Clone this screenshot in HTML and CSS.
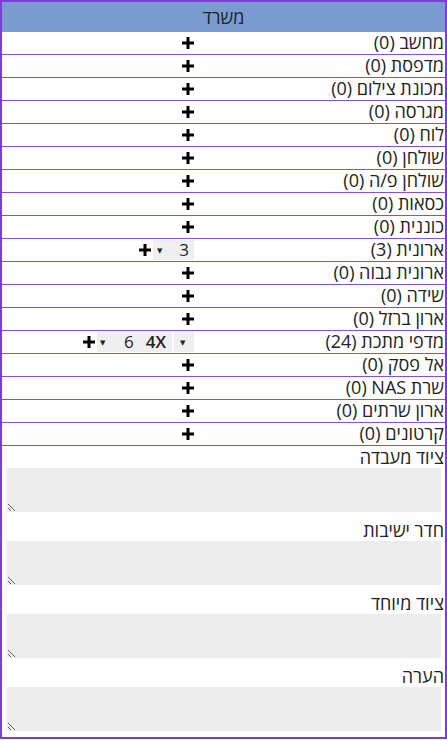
FILE: index.html
```html
<!DOCTYPE html>
<html lang="he" dir="rtl">
<head>
    <meta charset="UTF-8">
    <meta name="viewport" content="width=device-width, initial-scale=1.0">
    <title>משרד</title>
    <link rel="stylesheet" href="styles.css">
</head>
<body>
    <div class="office">
        <div class="office-head">משרד</div>

        <!-- equipment rows: name on the right, add button / pickers on the left -->
        <div class="item"><span class="name">מחשב (0)</span><span class="ctrl"><svg class="plus" viewBox="0 0 12 12"><rect x="4.5" y="0" width="3" height="12"/><rect x="0" y="4.5" width="12" height="3"/></svg></span></div>
        <div class="item"><span class="name">מדפסת (0)</span><span class="ctrl"><svg class="plus" viewBox="0 0 12 12"><rect x="4.5" y="0" width="3" height="12"/><rect x="0" y="4.5" width="12" height="3"/></svg></span></div>
        <div class="item"><span class="name">מכונת צילום (0)</span><span class="ctrl"><svg class="plus" viewBox="0 0 12 12"><rect x="4.5" y="0" width="3" height="12"/><rect x="0" y="4.5" width="12" height="3"/></svg></span></div>
        <div class="item"><span class="name">מגרסה (0)</span><span class="ctrl"><svg class="plus" viewBox="0 0 12 12"><rect x="4.5" y="0" width="3" height="12"/><rect x="0" y="4.5" width="12" height="3"/></svg></span></div>
        <div class="item"><span class="name">לוח (0)</span><span class="ctrl"><svg class="plus" viewBox="0 0 12 12"><rect x="4.5" y="0" width="3" height="12"/><rect x="0" y="4.5" width="12" height="3"/></svg></span></div>
        <div class="item"><span class="name">שולחן (0)</span><span class="ctrl"><svg class="plus" viewBox="0 0 12 12"><rect x="4.5" y="0" width="3" height="12"/><rect x="0" y="4.5" width="12" height="3"/></svg></span></div>
        <div class="item"><span class="name">שולחן פ/ה (0)</span><span class="ctrl"><svg class="plus" viewBox="0 0 12 12"><rect x="4.5" y="0" width="3" height="12"/><rect x="0" y="4.5" width="12" height="3"/></svg></span></div>
        <div class="item"><span class="name">כסאות (0)</span><span class="ctrl"><svg class="plus" viewBox="0 0 12 12"><rect x="4.5" y="0" width="3" height="12"/><rect x="0" y="4.5" width="12" height="3"/></svg></span></div>
        <div class="item"><span class="name">כוננית (0)</span><span class="ctrl"><svg class="plus" viewBox="0 0 12 12"><rect x="4.5" y="0" width="3" height="12"/><rect x="0" y="4.5" width="12" height="3"/></svg></span></div>
        <div class="item">
            <span class="name">ארונית (3)</span>
            <span class="ctrl">
                <span class="pick pick-count"><span class="val">3</span><span class="arrow">▼</span></span>
                <svg class="plus" viewBox="0 0 12 12"><rect x="4.5" y="0" width="3" height="12"/><rect x="0" y="4.5" width="12" height="3"/></svg>
            </span>
        </div>
        <div class="item"><span class="name">ארונית גבוה (0)</span><span class="ctrl"><svg class="plus" viewBox="0 0 12 12"><rect x="4.5" y="0" width="3" height="12"/><rect x="0" y="4.5" width="12" height="3"/></svg></span></div>
        <div class="item"><span class="name">שידה (0)</span><span class="ctrl"><svg class="plus" viewBox="0 0 12 12"><rect x="4.5" y="0" width="3" height="12"/><rect x="0" y="4.5" width="12" height="3"/></svg></span></div>
        <div class="item"><span class="name">ארון ברזל (0)</span><span class="ctrl"><svg class="plus" viewBox="0 0 12 12"><rect x="4.5" y="0" width="3" height="12"/><rect x="0" y="4.5" width="12" height="3"/></svg></span></div>
        <div class="item">
            <span class="name">מדפי מתכת (24)</span>
            <span class="ctrl">
                <span class="pick pick-empty"><span class="arrow">▼</span></span>
                <span class="pick pick-size"><span class="val size">4X</span><span class="val">6</span><span class="arrow">▼</span></span>
                <svg class="plus" viewBox="0 0 12 12"><rect x="4.5" y="0" width="3" height="12"/><rect x="0" y="4.5" width="12" height="3"/></svg>
            </span>
        </div>
        <div class="item"><span class="name">אל פסק (0)</span><span class="ctrl"><svg class="plus" viewBox="0 0 12 12"><rect x="4.5" y="0" width="3" height="12"/><rect x="0" y="4.5" width="12" height="3"/></svg></span></div>
        <div class="item"><span class="name">שרת NAS&rlm; (0)</span><span class="ctrl"><svg class="plus" viewBox="0 0 12 12"><rect x="4.5" y="0" width="3" height="12"/><rect x="0" y="4.5" width="12" height="3"/></svg></span></div>
        <div class="item"><span class="name">ארון שרתים (0)</span><span class="ctrl"><svg class="plus" viewBox="0 0 12 12"><rect x="4.5" y="0" width="3" height="12"/><rect x="0" y="4.5" width="12" height="3"/></svg></span></div>
        <div class="item"><span class="name">קרטונים (0)</span><span class="ctrl"><svg class="plus" viewBox="0 0 12 12"><rect x="4.5" y="0" width="3" height="12"/><rect x="0" y="4.5" width="12" height="3"/></svg></span></div>

        <!-- free text notes -->
        <div class="notes">
            <label class="note-label" for="lab">ציוד מעבדה</label>
            <textarea id="lab"></textarea>
            <label class="note-label" for="meeting">חדר ישיבות</label>
            <textarea id="meeting"></textarea>
            <label class="note-label" for="special">ציוד מיוחד</label>
            <textarea id="special"></textarea>
            <label class="note-label" for="remark">הערה</label>
            <textarea id="remark"></textarea>
        </div>
    </div>
</body>
</html>
```

FILE: styles.css
```css
body {
    margin: 0;
    font-family: "Open Sans", "DejaVu Sans", sans-serif;
    font-size: 18px;
    color: #222;
    background-color: white;
}

.office {
    width: 447px;
    box-sizing: border-box;
    border: 2px solid #7c3fd4;
}

.office-head {
    height: 30px;
    line-height: 30px;
    text-align: center;
    background-color: #7a9bd0;
}

.item {
    display: grid;
    grid-template-columns: 249px 1fr;
    height: 22px;
    border-bottom: 1px solid #8a4dd8;
}

.name {
    padding-right: 1px;
    line-height: 21px;
    white-space: nowrap;
}

.ctrl {
    display: flex;
    align-items: center;
    gap: 2px;
    padding-right: 2px;
}

.plus {
    width: 12px;
    height: 12px;
    fill: black;
}

.pick {
    display: flex;
    align-items: center;
    justify-content: space-between;
    height: 20px;
    background-color: #efefef;
}

.pick .val {
    font-size: 17px;
    line-height: 20px;
}

.pick .size {
    font-weight: 600;
}

.arrow {
    font-size: 7px;
    color: #222;
}

.pick-count {
    width: 41px;
    padding: 0 5px 0 4px;
    box-sizing: border-box;
}

.pick-empty {
    width: 20px;
    padding-left: 6px;
    box-sizing: border-box;
    justify-content: flex-end;
}

.pick-size {
    width: 75px;
    padding: 0 6px 0 3px;
    box-sizing: border-box;
    justify-content: flex-start;
    gap: 12px;
}

.pick-size .arrow {
    margin-right: auto;
}

.notes {
    display: flex;
    flex-direction: column;
    padding-bottom: 6px;
}

.note-label {
    display: block;
    line-height: 22px;
    padding-right: 1px;
}

textarea {
    display: block;
    height: 44px;
    margin: 0 4px 7px 5px;
    padding: 2px;
    box-sizing: border-box;
    border: none;
    background-color: #ececec;
    font-family: inherit;
}

textarea:last-child {
    margin-bottom: 0;
}
```
